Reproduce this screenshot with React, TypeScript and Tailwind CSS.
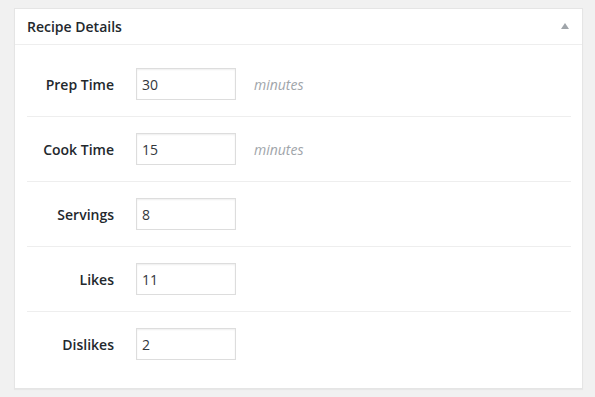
import React from 'react';

interface Field {
  label: string;
  value: string;
  unit?: string;
}

const fields: Field[] = [
  { label: 'Prep Time', value: '30', unit: 'minutes' },
  { label: 'Cook Time', value: '15', unit: 'minutes' },
  { label: 'Servings', value: '8' },
  { label: 'Likes', value: '11' },
  { label: 'Dislikes', value: '2' },
];

const App: React.FC = () => {
  return (
    <div
      className="min-h-[397px] w-[595px] bg-[#f1f1f1] pl-[14px] pt-[8px]"
      style={{ fontFamily: '"Open Sans", "Liberation Sans", sans-serif' }}
    >
      <div className="w-[569px] border border-[#e5e5e5] bg-white shadow-[0_1px_1px_rgba(0,0,0,0.04)]">
        <div className="flex h-[36px] items-center justify-between border-b border-[#eeeeee] pl-[12px] pr-[13px]">
          <h2 className="text-[14px] font-semibold leading-[19px] text-[#23282d]">Recipe Details</h2>
          <svg width="8" height="6" viewBox="0 0 8 6" className="mt-[-1px]">
            <polygon points="4,0 8,6 0,6" fill="#a0a5aa" />
          </svg>
        </div>
        <div className="pl-[12px] pr-[11px] pb-[12px] pt-[7px]">
          {fields.map((f, i) => (
            <div
              key={f.label}
              className={
                'flex items-center ' +
                (i < fields.length - 1 ? 'h-[65px] border-b border-[#eeeeee]' : 'h-[64px]')
              }
            >
              <label className="w-[87px] text-right text-[14px] font-semibold text-[#23282d]">
                {f.label}
              </label>
              <input
                type="text"
                defaultValue={f.value}
                className="ml-[22px] h-[32px] w-[100px] border border-[#dddddd] bg-white px-[5px] text-[14px] text-[#32373c] shadow-[inset_0_1px_2px_rgba(0,0,0,0.07)] outline-none"
              />
              {f.unit && (
                <span className="ml-[18px] text-[14px] italic text-[#a0a5aa]">{f.unit}</span>
              )}
            </div>
          ))}
        </div>
      </div>
    </div>
  );
};

export default App;
